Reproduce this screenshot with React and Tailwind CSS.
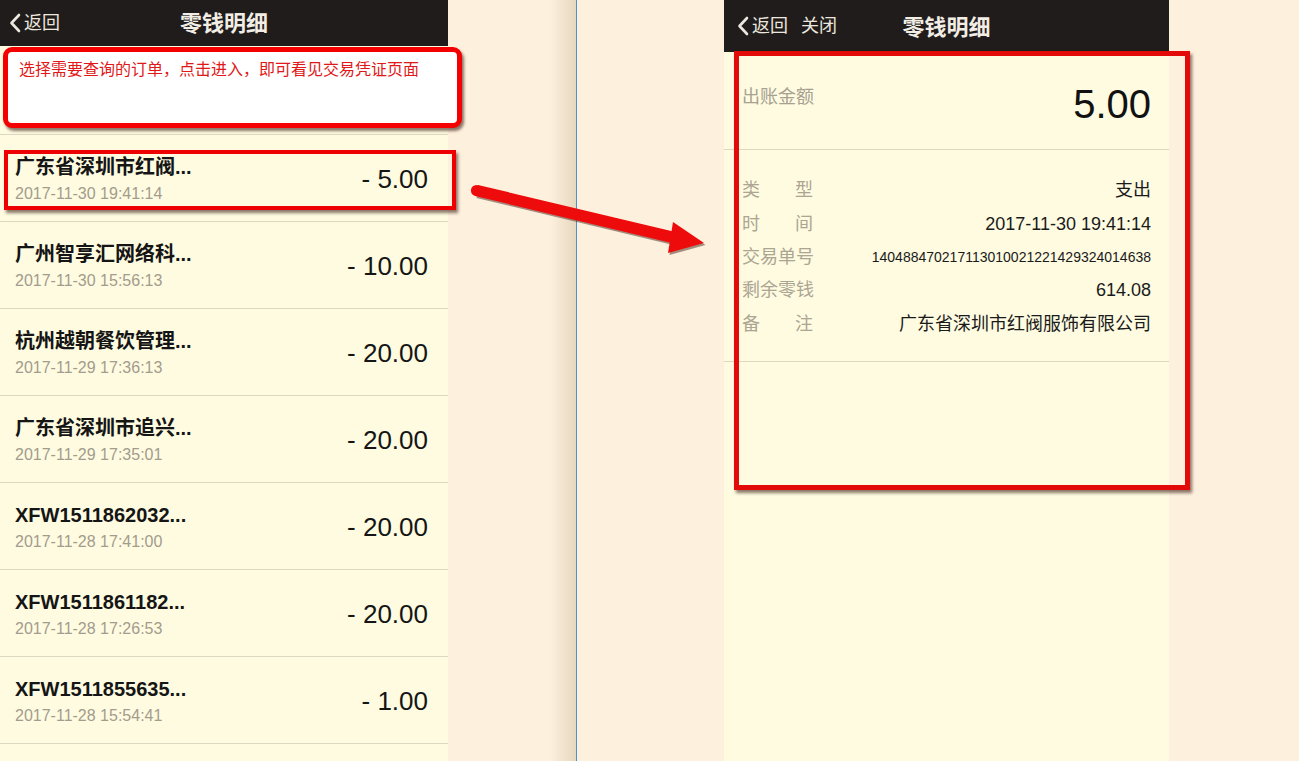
import React from "react";

const FONT = { fontFamily: '"Liberation Sans", "Noto Sans CJK SC", sans-serif' };

const records = [
  { name: "广东省深圳市红阀...", time: "2017-11-30 19:41:14", amount: "- 5.00" },
  { name: "广州智享汇网络科...", time: "2017-11-30 15:56:13", amount: "- 10.00" },
  { name: "杭州越朝餐饮管理...", time: "2017-11-29 17:36:13", amount: "- 20.00" },
  { name: "广东省深圳市追兴...", time: "2017-11-29 17:35:01", amount: "- 20.00" },
  { name: "XFW1511862032...", time: "2017-11-28 17:41:00", amount: "- 20.00" },
  { name: "XFW1511861182...", time: "2017-11-28 17:26:53", amount: "- 20.00" },
  { name: "XFW1511855635...", time: "2017-11-28 15:54:41", amount: "- 1.00" },
];

const details = [
  { label: ["类", "型"], value: "支出" },
  { label: ["时", "间"], value: "2017-11-30 19:41:14" },
  { label: ["交", "易", "单", "号"], value: "140488470217113010021221429324014638", small: true },
  { label: ["剩", "余", "零", "钱"], value: "614.08" },
  { label: ["备", "注"], value: "广东省深圳市红阀服饰有限公司" },
];

function Chevron() {
  return (
    <svg viewBox="0 0 12 20" className="w-[12px] h-[20px]" fill="none" stroke="#ece8df" strokeWidth="2.6" strokeLinecap="round" strokeLinejoin="round">
      <path d="M10 2 L2.5 10 L10 18" />
    </svg>
  );
}

function Arrow() {
  return (
    <svg className="absolute left-[466px] top-[180px] w-[250px] h-[80px]" viewBox="0 0 250 80">
      <g transform="translate(1.5 2)" fill="#4a2a22" opacity="0.5">
        <path d="M12 5 L222 55 L218 66 L9 16 Z" />
        <path d="M207 42 L238 63 L202 73 Z" />
      </g>
      <g fill="#ee0b0b">
        <path d="M12 5 L222 55 L218 66 L9 16 Z" />
        <circle cx="10.5" cy="10.5" r="5.6" />
        <path d="M207 42 L238 63 L202 73 Z" />
      </g>
    </svg>
  );
}

function ListPanel() {
  return (
    <div className="w-[448px] h-full bg-[#fefbe1] flex flex-col shrink-0">
      <div className="h-[46px] bg-[#201c1b] flex items-center relative shrink-0">
        <div className="flex items-center gap-[3px] pl-[9px]">
          <Chevron />
          <span className="text-[18px] text-[#ece8df]">返回</span>
        </div>
        <div className="absolute inset-0 flex items-center justify-center">
          <span className="text-[22px] font-bold text-[#f2eee6]">零钱明细</span>
        </div>
      </div>
      <div className="h-[89px] border-b border-[#ddd6c0] shrink-0" />
      {records.map((r) => (
        <div key={r.time} className="h-[87px] border-b border-[#ddd6c0] flex items-center justify-between pl-[15px] pr-[20px] shrink-0">
          <div className="flex flex-col gap-[6px] pt-[1px]">
            <span className="text-[20px] leading-[24px] font-bold text-[#151515]">{r.name}</span>
            <span className="text-[16px] leading-[18px] text-[#a39c8c]">{r.time}</span>
          </div>
          <span className="text-[26px] text-[#151515] pt-[3px]">{r.amount}</span>
        </div>
      ))}
    </div>
  );
}

function DetailPanel() {
  return (
    <div className="w-[445px] h-full bg-[#fefbe1] flex flex-col shrink-0">
      <div className="h-[52px] bg-[#201c1b] flex items-center relative shrink-0">
        <div className="flex items-center pl-[13px]">
          <Chevron />
          <span className="text-[18px] text-[#ece8df] ml-[3px]">返回</span>
          <span className="text-[18px] text-[#ece8df] ml-[13px]">关闭</span>
        </div>
        <div className="absolute inset-0 flex items-center justify-center">
          <span className="text-[22px] font-bold text-[#f2eee6] pt-[2px]">零钱明细</span>
        </div>
      </div>
      <div className="h-[98px] border-b border-[#ddd6c0] flex justify-between items-start px-[18px] pt-[30px] shrink-0">
        <span className="text-[18px] leading-[22px] mt-[4px] text-[#a8a190]">出账金额</span>
        <span className="text-[40px] leading-[44px] text-[#111]">5.00</span>
      </div>
      <div className="h-[212px] border-b border-[#ddd6c0] flex flex-col px-[18px] pt-[24px] shrink-0">
        {details.map((d) => (
          <div key={d.value} className="h-[33.4px] flex items-center justify-between">
            <span className="w-[71px] flex justify-between text-[18px] text-[#aca592]">
              {d.label.map((c, i) => (
                <span key={i}>{c}</span>
              ))}
            </span>
            <span className={d.small ? "text-[14px] text-[#1a1a1a]" : "text-[18px] text-[#1a1a1a]"}>{d.value}</span>
          </div>
        ))}
      </div>
    </div>
  );
}

export default function App() {
  return (
    <div className="relative w-[1299px] h-[761px] overflow-hidden bg-[#fdf0dd] flex" style={FONT}>
      <ListPanel />
      <div className="w-[128px] h-full bg-gradient-to-r from-[#fdf0dd] from-[80%] to-[#e6d8bf] shrink-0" />
      <div className="w-[1px] h-full bg-[#4f8fcc] shrink-0" />
      <div className="w-[147px] h-full shrink-0" />
      <DetailPanel />

      {/* annotations */}
      <div className="absolute left-[3px] top-[47px] w-[459px] h-[81px] bg-white border-[5px] border-[#f40000] rounded-[9px] shadow-[2px_3px_3px_rgba(60,30,20,0.6)] pl-[11px] pt-[6px]">
        <span className="text-[16px] text-[#e01818]">选择需要查询的订单，点击进入，即可看见交易凭证页面</span>
      </div>
      <div className="absolute left-[4px] top-[150px] w-[452px] h-[60px] border-[4px] border-[#ee0000] shadow-[2px_3px_3px_rgba(60,30,20,0.6)]" />
      <div className="absolute left-[734px] top-[51px] w-[456px] h-[439px] border-[5px] border-[#e30a0a] shadow-[2px_3px_3px_rgba(60,30,20,0.6)]" />
      <Arrow />
    </div>
  );
}
